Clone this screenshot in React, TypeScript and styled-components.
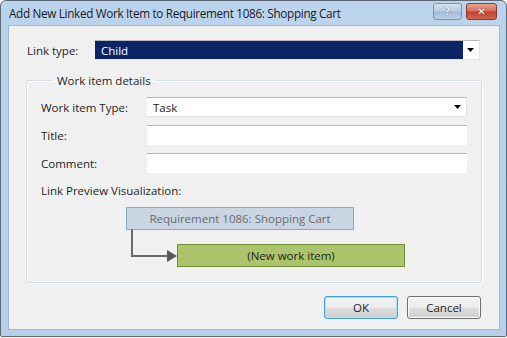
import React from 'react';
import styled, { createGlobalStyle } from 'styled-components';

const GlobalStyle = createGlobalStyle`
  html, body {
    margin: 0;
    padding: 0;
    background: #ffffff;
  }
  body {
    font-family: 'Open Sans', 'Noto Sans', sans-serif;
    font-size: 11.5px;
    color: #1e1e1e;
  }
`;

const Window = styled.div`
  width: 507px;
  height: 337px;
  box-sizing: border-box;
  border: 1px solid #5f6a78;
  border-radius: 6px 6px 2px 2px;
  background: linear-gradient(#bcd3ec, #b6cfea);
  display: flex;
  flex-direction: column;
  padding: 0 6px 6px 7px;
`;

const TitleBar = styled.div`
  height: 24px;
  display: flex;
  align-items: center;
  padding-left: 1px;
  font-size: 11.7px;
  color: #1a1a1a;
`;

const Title = styled.span`
  flex: 1;
  letter-spacing: -0.3px;
`;

const CaptionButton = styled.div<{ variant: 'help' | 'close' }>`
  height: 17px;
  width: ${p => (p.variant === 'close' ? 31 : 29)}px;
  margin-left: ${p => (p.variant === 'close' ? 4 : 0)}px;
  margin-right: ${p => (p.variant === 'close' ? 3 : 0)}px;
  margin-top: -3px;
  box-sizing: border-box;
  border: 1px solid ${p => (p.variant === 'close' ? '#8b3a2f' : '#7d93ad')};
  border-radius: 3px;
  background: ${p =>
    p.variant === 'close'
      ? 'linear-gradient(#e6a292 0%, #d7705c 45%, #c0432f 55%, #d2674f 100%)'
      : 'linear-gradient(#d6e3f1 0%, #b9cce2 45%, #a4bbd6 55%, #bdd0e6 100%)'};
  display: flex;
  align-items: center;
  justify-content: center;
  color: ${p => (p.variant === 'close' ? '#ffffff' : '#e8eef5')};
  font-weight: bold;
  font-size: 10px;
  font-family: 'DejaVu Sans', sans-serif;
  text-shadow: 0 0 1px #555;
`;

const Body = styled.div`
  flex: 1;
  background: #f0f0f0;
  border: 1px solid #a3b7cf;
  display: flex;
  flex-direction: column;
  padding: 14px 17px 10px 17px;
`;

const LinkRow = styled.div`
  display: flex;
  align-items: center;
  height: 20px;
  margin-right: 2px;
`;

const LinkLabel = styled.span`
  width: 68px;
  padding-left: 1px;
`;

const Combo = styled.div`
  flex: 1;
  height: 20px;
  box-sizing: border-box;
  display: flex;
  background: #ffffff;
  border-top: 1px solid #b9b9b9;
  border-right: 1px solid #e3e3e3;
  border-bottom: 1px solid #e3e3e3;
`;

const ComboValue = styled.div<{ selected?: boolean }>`
  flex: 1;
  display: flex;
  align-items: center;
  padding-left: 6px;
  background: ${p => (p.selected ? '#0a2466' : '#ffffff')};
  color: ${p => (p.selected ? '#ffffff' : '#1e1e1e')};
`;

const ComboArrow = styled.div`
  width: 16px;
  display: flex;
  align-items: center;
  justify-content: center;
`;

const Group = styled.fieldset`
  margin: 13px 0 0 0;
  padding: 9px 14px 0 14px;
  border: 1px solid #d5dfe5;
  border-radius: 3px;
  box-shadow: inset 1px 1px 0 #ffffff, 1px 1px 0 #ffffff;
  height: 210px;
  box-sizing: border-box;
`;

const Legend = styled.legend`
  padding: 0 4px 0 5px;
  margin-left: 11px;
  font-size: 11.5px;
`;

const FieldRow = styled.div`
  display: flex;
  align-items: center;
  height: 20px;
  margin-bottom: 8px;
`;

const FieldLabel = styled.span`
  width: 106px;
`;

const TextBox = styled.div`
  flex: 1;
  height: 20px;
  box-sizing: border-box;
  background: #ffffff;
  border-top: 1px solid #b9b9b9;
  display: flex;
  align-items: center;
  padding-left: 5px;
`;

const PreviewLabel = styled.div`
  margin-top: 10px;
`;

const Preview = styled.div`
  position: relative;
  height: 70px;
  margin-top: 9px;
`;

const Node = styled.div<{ kind: 'parent' | 'child' }>`
  position: absolute;
  left: ${p => (p.kind === 'parent' ? 85 : 136)}px;
  top: ${p => (p.kind === 'parent' ? 0 : 37)}px;
  width: 228px;
  height: 23px;
  box-sizing: border-box;
  background: ${p => (p.kind === 'parent' ? '#c9d5e2' : '#acc46b')};
  border: 1px solid ${p => (p.kind === 'parent' ? '#8ea8c2' : '#6e8f34')};
  color: ${p => (p.kind === 'parent' ? '#6b6b6b' : '#1e1e1e')};
  display: flex;
  align-items: center;
  justify-content: center;
`;

const Connector = styled.svg`
  position: absolute;
  left: 88px;
  top: 22px;
`;

const Footer = styled.div`
  flex: 1;
  display: flex;
  justify-content: flex-end;
  align-items: flex-end;
  gap: 9px;
  padding-right: 1px;
`;

const Button = styled.button<{ primary?: boolean }>`
  width: 74px;
  height: 23px;
  font-family: inherit;
  font-size: 11.5px;
  color: #1e1e1e;
  border-radius: 3px;
  border: 1px solid ${p => (p.primary ? '#3c9fd6' : '#707070')};
  box-shadow: inset 0 0 0 1px ${p => (p.primary ? '#a8e4f7' : '#fcfcfc')};
  background: linear-gradient(#f2f2f2 0%, #ebebeb 50%, #dddddd 51%, #cfcfcf 100%);
  padding: 0;
`;

const DownArrow = () => (
  <svg width="8" height="5" viewBox="0 0 8 5">
    <path d="M0 0 H7 L3.5 4 Z" fill="#000" />
  </svg>
);

const App: React.FC = () => (
  <>
    <GlobalStyle />
    <Window>
      <TitleBar>
        <Title>Add New Linked Work Item to Requirement 1086: Shopping Cart</Title>
        <CaptionButton variant="help">?</CaptionButton>
        <CaptionButton variant="close">✕</CaptionButton>
      </TitleBar>
      <Body>
        <LinkRow>
          <LinkLabel>Link type:</LinkLabel>
          <Combo>
            <ComboValue selected>Child</ComboValue>
            <ComboArrow>
              <DownArrow />
            </ComboArrow>
          </Combo>
        </LinkRow>
        <Group>
          <Legend>Work item details</Legend>
          <FieldRow>
            <FieldLabel>Work item Type:</FieldLabel>
            <Combo>
              <ComboValue>Task</ComboValue>
              <ComboArrow>
                <DownArrow />
              </ComboArrow>
            </Combo>
          </FieldRow>
          <FieldRow>
            <FieldLabel>Title:</FieldLabel>
            <TextBox />
          </FieldRow>
          <FieldRow>
            <FieldLabel>Comment:</FieldLabel>
            <TextBox />
          </FieldRow>
          <PreviewLabel>Link Preview Visualization:</PreviewLabel>
          <Preview>
            <Node kind="parent">Requirement 1086: Shopping Cart</Node>
            <Connector width="50" height="40" viewBox="0 0 50 40">
              <path d="M3 0 V27 H40" stroke="#6b6b6b" strokeWidth="2" fill="none" />
              <path d="M38 21 L48 27 L38 33 Z" fill="#5a5a5a" />
            </Connector>
            <Node kind="child">(New work item)</Node>
          </Preview>
        </Group>
        <Footer>
          <Button primary>OK</Button>
          <Button>Cancel</Button>
        </Footer>
      </Body>
    </Window>
  </>
);

export default App;
